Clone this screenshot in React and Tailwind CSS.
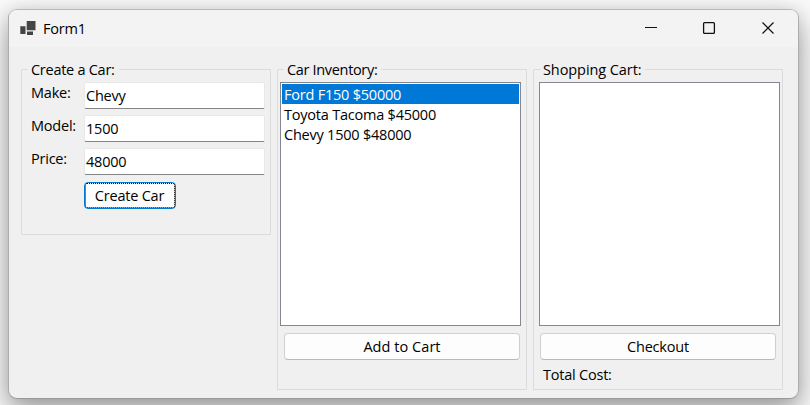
function Group({ title, legendClass, className, children }) {
  return (
    <section className={`flex w-[250px] flex-col border border-[#dcdcdc] ${className}`}>
      <div className={`-mt-[10px] ml-[6px] h-5 bg-[#f0f0f0] pl-[3px] leading-5 ${legendClass}`}>{title}</div>
      {children}
    </section>
  );
}

function Field({ label, value }) {
  return (
    <div className="flex h-[27px]">
      <label className="h-[22px] w-[53px] leading-[22px]">{label}</label>
      <div className="h-[27px] w-[181px] rounded-[2px] border border-[#e8e8e8] border-b-[#858585] bg-white pl-px leading-[26px]">
        {value}
      </div>
    </div>
  );
}

function WideButton({ children, className }) {
  return (
    <button className={`mt-[7px] h-[27px] w-[236px] rounded-[4px] border border-[#d0d0d0] border-b-[#bababa] bg-[#fdfdfd] leading-[25px] ${className}`}>
      {children}
    </button>
  );
}

export default function App() {
  return (
    <div className="h-[405px] w-[810px] overflow-hidden bg-[#f9f9f9] pl-2 pt-[9px] font-['Open_Sans','Noto_Sans',sans-serif] text-[14.5px] tracking-[-0.22px] whitespace-nowrap text-black">
      <main className="h-[390px] w-[791px] overflow-hidden rounded-[9px] border border-[#acacac] border-t-[#b8b8b8] border-b-[#999999] bg-[#f0f0f0] shadow-[0_12px_28px_rgba(0,0,0,0.36),0_0_16px_rgba(0,0,0,0.09)]">
        <header className="flex h-[37px] items-center bg-[#f3f3f3] pl-[11px]">
          <svg width="16" height="16" viewBox="0 0 16 16" className="shrink-0" fill="#454545">
            <path d="M0.300 5.300H5.500V13H0.300zM6.700 0H15.500V9.200H6.700zM7 10.500H13V14H7z" />
          </svg>
          <h1 className="ml-[7px] grow">Form1</h1>
          <svg width="132" height="14" viewBox="0 0 132 14" className="mr-[21px] -mt-px" fill="none" stroke="#111">
            <path d="M0 6.500H12" />
            <rect x="58.600" y="1.600" width="10.800" height="10.800" rx="1" strokeWidth="1.300" />
            <path d="M117.500 1.500L128.500 12.500M128.500 1.500L117.500 12.500" strokeWidth="1.200" />
          </svg>
        </header>
        <div className="flex items-start gap-[6px] pl-3 pt-[22px]">
          <Group title="Create a Car:" legendClass="w-[91px] tracking-[-0.27px]" className="h-[166px]">
            <div className="mt-[2px] ml-[9px] flex flex-col gap-[6px]">
              <Field label="Make:" value="Chevy" />
              <Field label="Model:" value="1500" />
              <Field label="Price:" value="48000" />
            </div>
            <button className="mt-[7px] ml-[62px] h-[27px] w-[92px] rounded-[4px] border border-[#0078d4] bg-[#fdfdfd]">
              <span className="block h-[25px] rounded-[2px] border border-dotted border-black pr-px leading-[24px]">Create Car</span>
            </button>
          </Group>
          <Group title="Car Inventory:" legendClass="w-[97px] tracking-[-0.33px]" className="h-[321px]">
            <ul className="mt-[2px] ml-[2px] h-[244px] w-[241px] border border-[#828790] bg-white p-px leading-[22px]">
              <li className="h-5 bg-[#0078d7] pl-[2px] text-white">Ford F150 $50000</li>
              <li className="h-5 pl-[2px]">Toyota Tacoma $45000</li>
              <li className="h-5 pl-[2px]">Chevy 1500 $48000</li>
            </ul>
            <WideButton className="ml-[6px] tracking-[0.05px]">Add to Cart</WideButton>
          </Group>
          <Group title="Shopping Cart:" legendClass="w-[105px] tracking-[-0.08px]" className="h-[321px]">
            <ul className="mt-[2px] ml-[5px] h-[244px] w-[241px] border border-[#828790] bg-white" />
            <WideButton className="ml-[6px]">Checkout</WideButton>
            <p className="mt-[5px] ml-[9px] leading-5">Total Cost:</p>
          </Group>
        </div>
      </main>
    </div>
  );
}
